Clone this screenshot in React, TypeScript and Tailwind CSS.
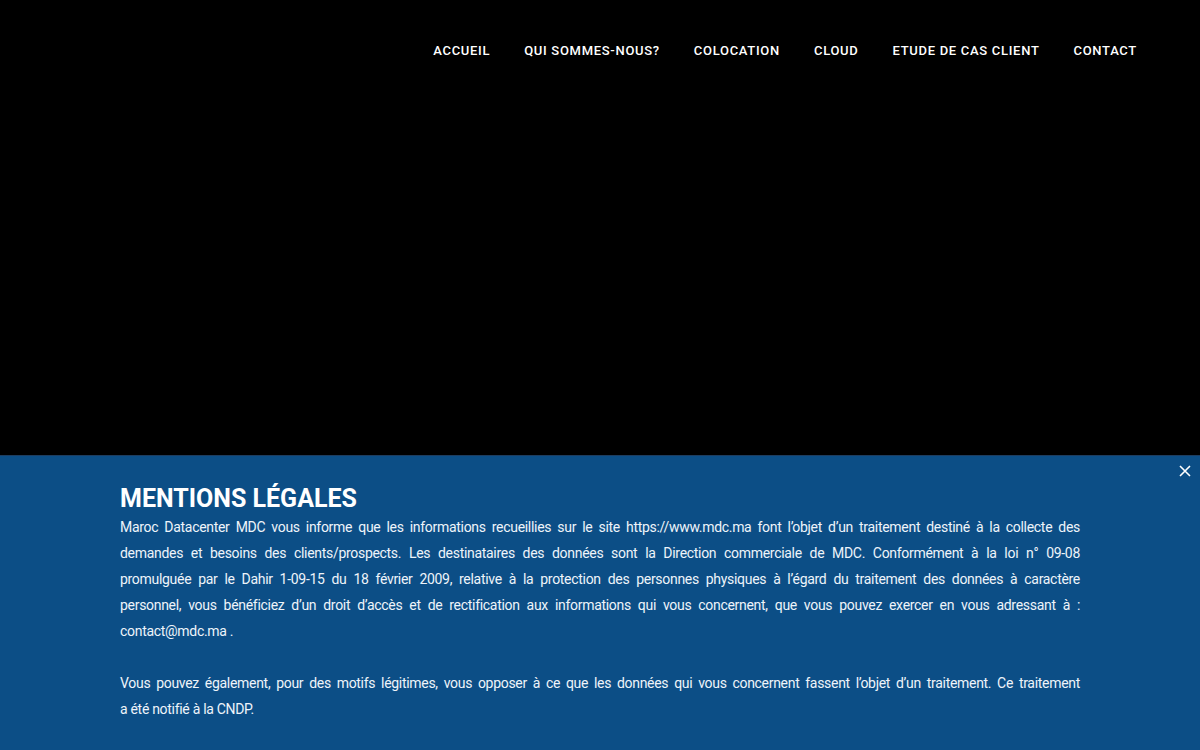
import React from "react";

const navItems = ["ACCUEIL", "QUI SOMMES-NOUS?", "COLOCATION", "CLOUD", "ETUDE DE CAS CLIENT", "CONTACT"];

const para1 = [
  "Maroc Datacenter MDC vous informe que les informations recueillies sur le site https://www.mdc.ma font l’objet d’un traitement destiné à la collecte des",
  "demandes et besoins des clients/prospects. Les destinataires des données sont la Direction commerciale de MDC. Conformément à la loi n° 09-08",
  "promulguée par le Dahir 1-09-15 du 18 février 2009, relative à la protection des personnes physiques à l’égard du traitement des données à caractère",
  "personnel, vous bénéficiez d’un droit d’accès et de rectification aux informations qui vous concernent, que vous pouvez exercer en vous adressant à :",
];

const para2 = [
  "Vous pouvez également, pour des motifs légitimes, vous opposer à ce que les données qui vous concernent fassent l’objet d’un traitement. Ce traitement",
];

const font = { fontFamily: '"Roboto", "Liberation Sans", sans-serif' };

export default function App() {
  return (
    <div className="h-[750px] w-[1200px] flex flex-col bg-black overflow-hidden" style={font}>
      <header className="h-[100px] flex items-center justify-end pr-[63px]">
        <nav className="flex items-center gap-[34px]">
          {navItems.map((n) => (
            <a key={n} className="text-white text-[13px] font-medium tracking-[0.7px] leading-none">
              {n}
            </a>
          ))}
        </nav>
      </header>
      <div className="flex-1" />
      <section className="relative h-[295px] bg-[#0c4e86] border-t border-[#1d3d60] px-[120px] pt-[28px] text-[#eef4fa]">
        <button className="absolute right-[1px] top-[1px] w-[28px] h-[28px] flex items-center justify-center text-white">
          <svg width="12" height="12" viewBox="0 0 12 12" fill="none" stroke="currentColor" strokeWidth="1.6">
            <path d="M1 1 L11 11 M11 1 L1 11" />
          </svg>
        </button>
        <h2 className="text-white text-[25px] font-bold tracking-[0px] leading-[30px]">MENTIONS LÉGALES</h2>
        <div className="text-[14px] leading-[26px] tracking-[-0.3px]">
          {para1.map((l, i) => (
            <div key={i} className="text-justify [text-align-last:justify] whitespace-nowrap">
              {l}
            </div>
          ))}
          <div>contact@mdc.ma .</div>
          <div className="h-[26px]" />
          {para2.map((l, i) => (
            <div key={i} className="text-justify [text-align-last:justify] whitespace-nowrap">
              {l}
            </div>
          ))}
          <div>a été notifié à la CNDP.</div>
        </div>
      </section>
    </div>
  );
}
